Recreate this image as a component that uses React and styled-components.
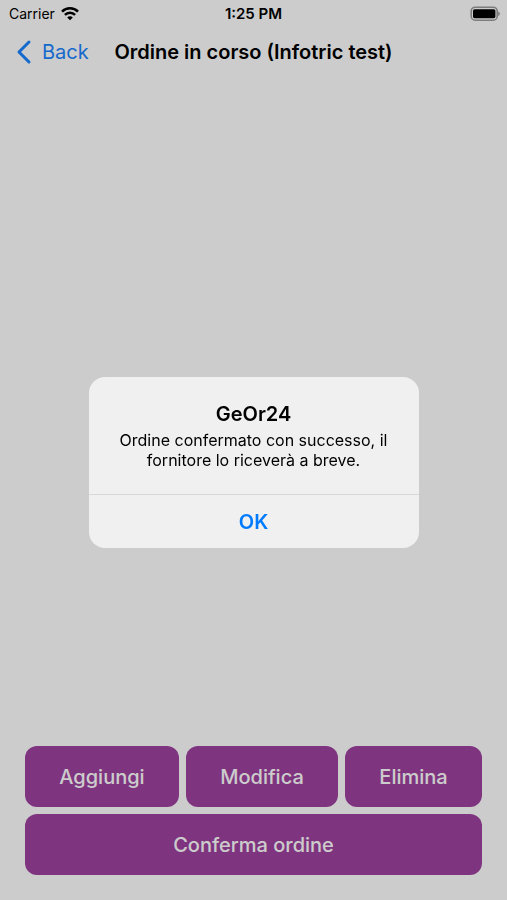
import React, { useState } from 'react'
import styled, { createGlobalStyle } from 'styled-components'

const GlobalStyle = createGlobalStyle`
  * {
    box-sizing: border-box;
  }
  body {
    margin: 0;
    background: #ffffff;
    color: #000000;
    font-family: Inter, "Liberation Sans", sans-serif;
  }
  button {
    font-family: inherit;
    border: none;
    cursor: pointer;
  }
`

const WifiIcon = () => (
  <svg width="18" height="14" viewBox="0 0 18 14" fill="none" stroke="#000000" strokeWidth="2.5" aria-hidden="true">
    <path d="M1 4.6C5.4 0.2 12.6 0.2 17 4.6" />
    <path d="M3.9 7.9C6.8 5 11.2 5 14.1 7.9" />
    <path d="M9 13.2L6.2 10.4C7.8 8.9 10.2 8.9 11.8 10.4Z" fill="#000000" stroke="none" />
  </svg>
)

const BatteryIcon = () => (
  <svg width="30" height="16" viewBox="0 0 30 16" aria-hidden="true">
    <rect x="1.2" y="1.2" width="26" height="13" rx="4" fill="none" stroke="#9c9c9c" strokeWidth="1.6" />
    <rect x="3" y="3.2" width="22.4" height="9" rx="1.6" fill="#000000" />
    <path d="M28.2 5.4C30.4 6.2 30.4 9.2 28.2 10Z" fill="#9c9c9c" />
  </svg>
)

const ChevronIcon = () => (
  <svg width="16" height="26" viewBox="0 0 16 26" fill="none" stroke="currentColor" strokeWidth="3" strokeLinecap="round" strokeLinejoin="round" aria-hidden="true">
    <path d="M13 3L3 13L13 23" />
  </svg>
)

const App = () => {
  const [open, setOpen] = useState(true)

  return (
    <>
      <GlobalStyle />
      <Screen>
        <StatusBar>
          <Carrier>Carrier <WifiIcon /></Carrier>
          <Time>1:25 PM</Time>
          <Battery><BatteryIcon /></Battery>
        </StatusBar>
        <NavBar>
          <BackLink href="#"><ChevronIcon />Back</BackLink>
          <NavTitle>Ordine in corso (Infotric test)</NavTitle>
        </NavBar>
        <Content />
        <Actions>
          <ActionRow>
            <ActionButton type="button">Aggiungi</ActionButton>
            <ActionButton type="button">Modifica</ActionButton>
            <ActionButton type="button">Elimina</ActionButton>
          </ActionRow>
          <ActionRow>
            <ActionButton type="button">Conferma ordine</ActionButton>
          </ActionRow>
        </Actions>
      </Screen>
      {open && (
        <Overlay>
          <Alert role="alertdialog" aria-labelledby="alert-title" aria-describedby="alert-text">
            <AlertBody>
              <AlertTitle id="alert-title">GeOr24</AlertTitle>
              <AlertText id="alert-text">Ordine confermato con successo, il fornitore lo riceverà a breve.</AlertText>
            </AlertBody>
            <AlertButton type="button" onClick={() => setOpen(false)}>OK</AlertButton>
          </Alert>
        </Overlay>
      )}
    </>
  )
}

const Screen = styled.div`
  display: flex;
  flex-direction: column;
  min-height: 100vh;
`

const StatusBar = styled.header`
  display: grid;
  grid-template-columns: 1fr auto 1fr;
  align-items: center;
  height: 27px;
  padding: 0 7px;
  font-size: 14px;
`

const Carrier = styled.span`
  display: flex;
  align-items: center;
  gap: 6px;
  padding-left: 2px;
`

const Time = styled.span`
  font-size: 15px;
  font-weight: 600;
`

const Battery = styled.span`
  display: flex;
  justify-content: flex-end;
`

const NavBar = styled.nav`
  display: grid;
  grid-template-columns: 1fr auto 1fr;
  align-items: center;
  height: 50px;
  padding: 0 16px;
`

const BackLink = styled.a`
  display: flex;
  align-items: center;
  gap: 10px;
  color: #1a84ff;
  font-size: 20px;
  text-decoration: none;
`

const NavTitle = styled.h1`
  margin: 0;
  font-size: 20px;
  font-weight: 600;
  white-space: nowrap;
`

const Content = styled.main`
  flex: 1;
`

const Actions = styled.footer`
  display: flex;
  flex-direction: column;
  gap: 7px;
  padding: 0 25px 25px;
`

const ActionRow = styled.div`
  display: flex;
  gap: 7px;
`

const ActionButton = styled.button`
  flex: 1 1 auto;
  height: 61px;
  padding: 0 16px;
  border-radius: 12px;
  background: #9f42a0;
  color: #ffffff;
  font-size: 20px;
  font-weight: 500;
`

const Overlay = styled.div`
  position: fixed;
  inset: 0;
  display: flex;
  align-items: center;
  justify-content: center;
  padding: 25px 16px 0;
  background: rgba(0, 0, 0, 0.2);
`

const Alert = styled.div`
  width: 100%;
  max-width: 330px;
  overflow: hidden;
  border-radius: 16px;
  background: #f0f0f0;
  text-align: center;
`

const AlertBody = styled.div`
  padding: 23px 20px 24px;
`

const AlertTitle = styled.h2`
  margin: 0 0 2px;
  font-size: 20px;
  font-weight: 600;
  line-height: 28px;
`

const AlertText = styled.p`
  margin: 0;
  font-size: 16px;
  line-height: 20px;
`

const AlertButton = styled.button`
  width: 100%;
  height: 54px;
  border-top: 1px solid #d8d8d8;
  background: transparent;
  color: #007aff;
  font-size: 20px;
  font-weight: 600;
`

export default App
